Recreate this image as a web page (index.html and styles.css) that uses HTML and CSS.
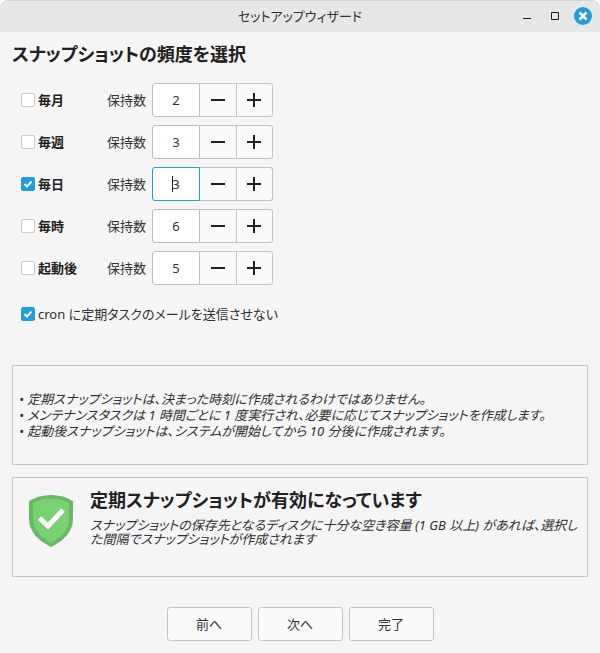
FILE: index.html
```html
<!DOCTYPE html>
<html lang="ja">
<head>
    <meta charset="UTF-8">
    <meta name="viewport" content="width=device-width, initial-scale=1.0">
    <title>セットアップウィザード</title>
    <link rel="stylesheet" href="styles.css">
</head>
<body>
    <div class="window">
        <header class="titlebar">
            <span class="title">セットアップウィザード</span>
            <div class="controls">
                <button type="button" aria-label="最小化"><svg width="18" height="18"><path d="M5 11.5h8" stroke="#1a1a1a"/></svg></button>
                <button type="button" aria-label="最大化"><svg width="18" height="18"><path d="M5.500 5.500h7v7h-7z" fill="none" stroke="#1a1a1a"/></svg></button>
                <button type="button" aria-label="閉じる"><svg width="18" height="18"><circle cx="9" cy="9" r="9" fill="#1f9ede"/><path d="M5.500 5.500l7 7M12.500 5.500l-7 7" stroke="#fff" stroke-width="2.500"/></svg></button>
            </div>
        </header>

        <main>
            <h1>スナップショットの頻度を選択</h1>

            <form class="levels">
                <div class="row">
                    <label class="level"><input type="checkbox">毎月</label>
                    <label class="keep" for="monthly">保持数</label>
                    <div class="spin">
                        <input type="text" id="monthly" value="2">
                        <button type="button" aria-label="減らす"><svg width="14" height="14"><path d="M0 7h14"/></svg></button>
                        <button type="button" aria-label="増やす"><svg width="14" height="14"><path d="M0 7h14M7 0v14"/></svg></button>
                    </div>
                </div>
                <div class="row">
                    <label class="level"><input type="checkbox">毎週</label>
                    <label class="keep" for="weekly">保持数</label>
                    <div class="spin">
                        <input type="text" id="weekly" value="3">
                        <button type="button" aria-label="減らす"><svg width="14" height="14"><path d="M0 7h14"/></svg></button>
                        <button type="button" aria-label="増やす"><svg width="14" height="14"><path d="M0 7h14M7 0v14"/></svg></button>
                    </div>
                </div>
                <div class="row">
                    <label class="level"><input type="checkbox" checked>毎日</label>
                    <label class="keep" for="daily">保持数</label>
                    <div class="spin">
                        <input type="text" id="daily" class="active" value="3">
                        <button type="button" aria-label="減らす"><svg width="14" height="14"><path d="M0 7h14"/></svg></button>
                        <button type="button" aria-label="増やす"><svg width="14" height="14"><path d="M0 7h14M7 0v14"/></svg></button>
                    </div>
                </div>
                <div class="row">
                    <label class="level"><input type="checkbox">毎時</label>
                    <label class="keep" for="hourly">保持数</label>
                    <div class="spin">
                        <input type="text" id="hourly" value="6">
                        <button type="button" aria-label="減らす"><svg width="14" height="14"><path d="M0 7h14"/></svg></button>
                        <button type="button" aria-label="増やす"><svg width="14" height="14"><path d="M0 7h14M7 0v14"/></svg></button>
                    </div>
                </div>
                <div class="row">
                    <label class="level"><input type="checkbox">起動後</label>
                    <label class="keep" for="boot">保持数</label>
                    <div class="spin">
                        <input type="text" id="boot" value="5">
                        <button type="button" aria-label="減らす"><svg width="14" height="14"><path d="M0 7h14"/></svg></button>
                        <button type="button" aria-label="増やす"><svg width="14" height="14"><path d="M0 7h14M7 0v14"/></svg></button>
                    </div>
                </div>
                <label class="cron"><input type="checkbox" checked>cron に定期タスクのメールを送信させない</label>
            </form>

            <section class="panel notes">
                <p>• 定期スナップショットは、決まった時刻に作成されるわけではありません。</p>
                <p>• メンテナンスタスクは 1 時間ごとに 1 度実行され、必要に応じてスナップショットを作成します。</p>
                <p>• 起動後スナップショットは、システムが開始してから 10 分後に作成されます。</p>
            </section>

            <section class="panel status">
                <svg class="shield" width="44" height="52" viewBox="0 0 44 52">
                    <path d="M0 6C13-2 31-2 44 6v18c0 13-10 22-22 28C10 46 0 37 0 24z" fill="#68b864"/>
                    <path d="M4 8C15 2 29 2 40 8v16c0 11-8 18-18 24C12 42 4 35 4 24z" fill="#78d173"/>
                    <path d="M10.500 23l8.500 8L34 15" fill="none" stroke="#fff" stroke-width="5"/>
                </svg>
                <div class="status-text">
                    <h2>定期スナップショットが有効になっています</h2>
                    <p>スナップショットの保存先となるディスクに十分な空き容量 (1 GB 以上) があれば、選択した間隔でスナップショットが作成されます</p>
                </div>
            </section>
        </main>

        <footer class="actions">
            <button type="button">前へ</button>
            <button type="button">次へ</button>
            <button type="button">完了</button>
        </footer>
    </div>
</body>
</html>
```
FILE: styles.css
```css
* {
    box-sizing: border-box;
}
body {
    margin: 0;
    background: #fff;
    color: #303030;
    font: 13px/16px "Noto Sans", "Noto Sans CJK JP", sans-serif;
    font-feature-settings: "palt";
}
button, input {
    margin: 0;
    padding: 0;
    font: inherit;
    font-feature-settings: inherit;
    color: inherit;
}
h1, h2, p {
    margin: 0;
}
.window {
    min-height: 100vh;
    background: #f5f5f5;
    border-radius: 8px 8px 0 0;
    overflow: hidden;
}

/* title bar */
.titlebar {
    display: grid;
    grid-template-columns: 1fr auto 1fr;
    align-items: center;
    height: 32px;
    padding: 0 8px;
    background: #e7e7e7;
    border-radius: 8px 8px 0 0;
    box-shadow: inset 0 1px #d4d4d4;
}
.title {
    grid-column: 2;
}
.controls {
    display: flex;
    justify-content: flex-end;
    gap: 10px;
}
.controls button {
    width: 18px;
    height: 18px;
    border: none;
    background: none;
}
.controls svg {
    display: block;
}

main {
    padding: 8px 12px 0;
}
h1, h2 {
    color: #202020;
    font-size: 18px;
    line-height: 28px;
    font-weight: bold;
}

/* snapshot levels */
.levels {
    display: flex;
    flex-direction: column;
    align-items: flex-start;
    gap: 8px;
    padding: 15px 9px 0;
}
.row {
    display: flex;
    align-items: center;
}
.level, .cron {
    display: flex;
    align-items: center;
    gap: 3px;
}
.level {
    width: 86px;
    color: #202020;
    font-weight: bold;
}
.cron {
    margin-top: 13px;
}
.keep {
    width: 45px;
}
input[type="checkbox"] {
    appearance: none;
    width: 14px;
    height: 14px;
    border: 1px solid #c9c9c9;
    border-radius: 2px;
    background: #fff;
}
input[type="checkbox"]:checked {
    border-color: #1f9ede;
    background: #1f9ede url("data:image/svg+xml,%3Csvg xmlns='http://www.w3.org/2000/svg' viewBox='0 0 12 12'%3E%3Cpath d='M2.500 6l2.500 2.500 4.500-5' fill='none' stroke='white' stroke-width='2'/%3E%3C/svg%3E") center / 12px 12px no-repeat;
}
.spin {
    display: flex;
    height: 34px;
}
.spin input {
    width: 48px;
    border: 1px solid #bdbdbd;
    border-radius: 3px 0 0 3px;
    background: #fff;
    text-align: center;
}
.spin input.active {
    border-color: #1f9ede;
    background: linear-gradient(#202020, #202020) 19px center / 1px 16px no-repeat #fff;
}
.spin button {
    display: flex;
    align-items: center;
    justify-content: center;
    width: 37px;
    border: 1px solid #c4c4c4;
    border-left: none;
    background: #fafafa;
}
.spin button:last-child {
    width: 36px;
    padding-right: 1px;
    border-radius: 0 3px 3px 0;
}
.spin path {
    stroke: #202020;
    stroke-width: 2;
}

/* info panels */
.panel {
    display: flex;
    min-height: 100px;
    border: 1px solid #c4c4c4;
}
.notes {
    flex-direction: column;
    justify-content: center;
    margin-top: 43px;
    padding: 0 6px;
    font-style: italic;
}
.status {
    align-items: flex-start;
    gap: 17px;
    margin-top: 12px;
    padding: 8px 6px 8px 16px;
}
.shield {
    flex: none;
    margin-top: 9px;
}
.status-text {
    flex: 1;
}
.status p {
    margin-top: 4px;
    font-style: italic;
    line-height: 14px;
}

/* wizard buttons */
.actions {
    display: flex;
    justify-content: center;
    gap: 6px;
    padding: 30px 12px 12px;
}
.actions button {
    width: 85px;
    height: 34px;
    border: 1px solid #c4c4c4;
    border-radius: 3px;
    background: #fafafa;
}
```
